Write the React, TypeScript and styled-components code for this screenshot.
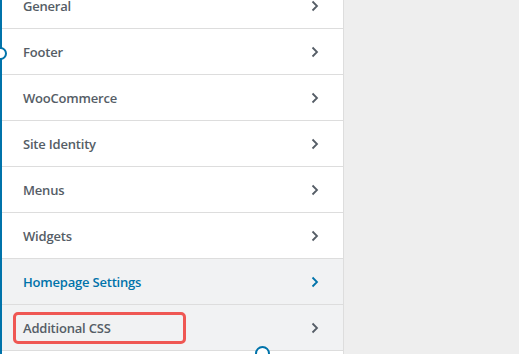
import React from "react";
import styled, { createGlobalStyle } from "styled-components";

const Global = createGlobalStyle`
  html, body { margin: 0; padding: 0; background: #eeeeee; overflow: hidden; }
  body { font-family: "Open Sans", "Noto Sans", sans-serif; }
`;

const Page = styled.div`
  display: flex;
  width: 519px;
  height: 354px;
  overflow: hidden;
  background: #eeeeee;
`;

const Panel = styled.div`
  position: relative;
  width: 341px;
  flex: none;
  background: #ffffff;
  border-left: 2px solid #0073aa;
  border-right: 1px solid #dddddd;
  overflow: hidden;
`;

const List = styled.ul`
  list-style: none;
  margin: -17px 0 0 0;
  padding: 0;
`;

const Row = styled.li<{ $gray?: boolean; $active?: boolean }>`
  position: relative;
  display: flex;
  align-items: center;
  justify-content: space-between;
  height: 45px;
  padding: 0 24px 0 21px;
  border-bottom: 1px solid #dddddd;
  background: ${(p) => (p.$gray ? "#f1f2f3" : "#ffffff")};
  color: ${(p) => (p.$active ? "#0073aa" : "#555d66")};
  font-size: 13px;
  font-weight: 600;
  letter-spacing: -0.2px;
`;

const Label = styled.span`
  line-height: 1;
  padding-top: 2px;
`;

const Chevron = styled.svg`
  width: 8px;
  height: 12px;
  flex: none;
`;

const Highlight = styled.div`
  position: absolute;
  left: 11px;
  top: 7px;
  width: 167px;
  height: 26px;
  border: 3px solid #ef5753;
  border-radius: 5px;
  pointer-events: none;
`;

const Handle = styled.div<{ $size: number }>`
  position: absolute;
  width: ${(p) => p.$size}px;
  height: ${(p) => p.$size}px;
  box-sizing: border-box;
  border: 2px solid #0073aa;
  border-radius: 50%;
  background: #ffffff;
`;

const Arrow = ({ color }: { color: string }) => (
  <Chevron viewBox="0 0 8 12">
    <path d="M1.5 1.5 L6 6 L1.5 10.5" fill="none" stroke={color} strokeWidth="1.8" />
  </Chevron>
);

const items = [
  { label: "General" },
  { label: "Footer" },
  { label: "WooCommerce" },
  { label: "Site Identity" },
  { label: "Menus" },
  { label: "Widgets" },
  { label: "Homepage Settings", gray: true, active: true },
  { label: "Additional CSS", gray: true, highlight: true },
  { label: "" },
];

export default function App() {
  return (
    <Page>
      <Global />
      <Panel>
        <List>
          {items.map((it, i) => (
            <Row key={i} $gray={it.gray} $active={it.active}>
              <Label>{it.label}</Label>
              {it.label && <Arrow color={it.active ? "#0073aa" : "#555d66"} />}
              {it.highlight && <Highlight />}
            </Row>
          ))}
        </List>
      </Panel>
      <Handle $size={13} style={{ left: -6, top: 47 }} />
      <Handle $size={15} style={{ left: 255, top: 346 }} />
    </Page>
  );
}
